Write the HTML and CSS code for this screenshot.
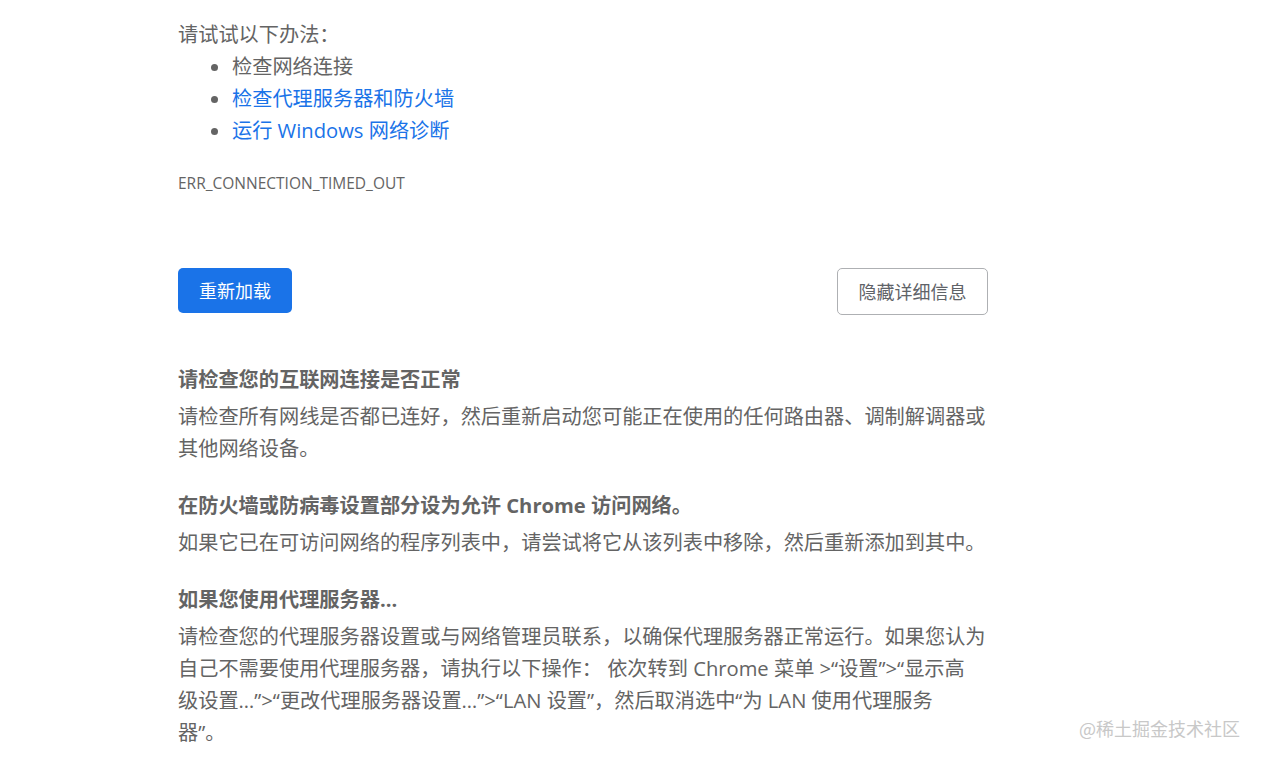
FILE: index.html
```html
<!DOCTYPE html>
<html lang="zh-CN">
<head>
    <meta charset="UTF-8">
    <meta name="viewport" content="width=device-width, initial-scale=1.0">
    <title>无法访问此网站</title>
    <link rel="stylesheet" href="styles.css">
</head>
<body>
    <div class="main-content">
        <p class="suggest-title">请试试以下办法：</p>
        <ul class="suggest-list">
            <li>检查网络连接</li>
            <li><a href="#">检查代理服务器和防火墙</a></li>
            <li><a href="#">运行 Windows 网络诊断</a></li>
        </ul>
        <div class="error-code">ERR_CONNECTION_TIMED_OUT</div>

        <div class="nav-wrapper">
            <button class="blue-button">重新加载</button>
            <button class="details-button">隐藏详细信息</button>
        </div>

        <div class="details">
            <div class="detail-block">
                <h3>请检查您的互联网连接是否正常</h3>
                <p>请检查所有网线是否都已连好，然后重新启动您可能正在使用的任何路由器、调制解调器或其他网络设备。</p>
            </div>
            <div class="detail-block">
                <h3>在防火墙或防病毒设置部分设为允许 Chrome 访问网络。</h3>
                <p>如果它已在可访问网络的程序列表中，请尝试将它从该列表中移除，然后重新添加到其中。</p>
            </div>
            <div class="detail-block">
                <h3>如果您使用代理服务器…</h3>
                <p>请检查您的代理服务器设置或与网络管理员联系，以确保代理服务器正常运行。如果您认为自己不需要使用代理服务器，请执行以下操作： 依次转到 Chrome 菜单 &gt;“设置”&gt;“显示高<br>级设置…”&gt;“更改代理服务器设置…”&gt;“LAN 设置”，然后取消选中“为 LAN 使用代理服务<br>器”。</p>
            </div>
        </div>
    </div>

    <div class="watermark">@稀土掘金技术社区</div>
</body>
</html>
```

FILE: styles.css
```css
body {
    margin: 0;
    background-color: #ffffff;
    color: #646464;
    font-family: "Open Sans", "Noto Sans CJK SC", sans-serif;
    font-size: 20.2px;
    line-height: 32px;
}

.main-content {
    width: 810px;
    padding: 18px 0 0 178px;
}

.suggest-title {
    margin: 0;
}

.suggest-list {
    margin: 0;
    padding-left: 54px;
}

.suggest-list a {
    color: #1a73e8;
    text-decoration: none;
}

.error-code {
    margin-top: 21px;
    font-size: 15.5px;
    line-height: 32px;
    color: #646464;
}

.nav-wrapper {
    display: flex;
    justify-content: space-between;
    align-items: flex-start;
    margin-top: 69px;
}

button {
    font-family: "Open Sans", "Noto Sans CJK SC", sans-serif;
    font-size: 18px;
    border-radius: 5px;
    cursor: pointer;
}

.blue-button {
    background-color: #1a73e8;
    color: #ffffff;
    border: none;
    width: 114px;
    height: 45px;
    padding: 0 0 2px 0;
}

.details-button {
    background-color: #ffffff;
    color: #5f6368;
    border: 1px solid #aeb0b3;
    width: 151px;
    height: 47px;
    padding: 0 0 2px 0;
}

.details {
    margin-top: 48px;
}

.detail-block h3 {
    margin: 0;
    font-size: 20.2px;
    font-weight: 700;
    line-height: 32px;
}

.detail-block p {
    margin: 5px 0 0 0;
}

.detail-block + .detail-block {
    margin-top: 25px;
}

.watermark {
    position: absolute;
    right: 22px;
    top: 713px;
    font-family: "Noto Sans CJK SC", sans-serif;
    font-size: 18px;
    line-height: 30px;
    color: #c8c8c8;
}
```
